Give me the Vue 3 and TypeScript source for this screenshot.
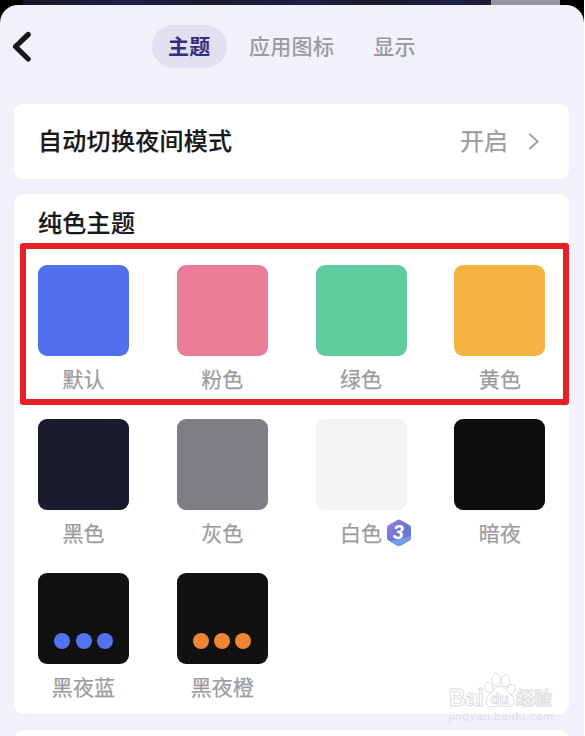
<script setup lang="ts">
interface Theme {
  name: string
  color: string
  dots?: string
  badge?: boolean
}

const tabs: string[] = ['主题', '应用图标', '显示']
const themes: Theme[] = [
  { name: '默认', color: '#5070ee' },
  { name: '粉色', color: '#eb7c97' },
  { name: '绿色', color: '#5fcb9f' },
  { name: '黄色', color: '#f5b341' },
  { name: '黑色', color: '#191a2b' },
  { name: '灰色', color: '#7e7f84' },
  { name: '白色', color: '#f3f3f3', badge: true },
  { name: '暗夜', color: '#0d0d0d' },
  { name: '黑夜蓝', color: '#111111', dots: '#5473f2' },
  { name: '黑夜橙', color: '#111111', dots: '#ef8432' },
]
</script>

<template>
  <div class="screen">
    <div class="backdrop"><span class="backdrop-art"></span><span class="backdrop-light"></span></div>
    <main class="sheet">
      <header class="header">
        <svg class="back" width="22" height="32" viewBox="0 0 22 32">
          <path d="M17.2 3.5 4.5 15.7 17.2 28" fill="none" stroke="#17171a" stroke-width="5.2" stroke-linecap="round" stroke-linejoin="round" />
        </svg>
        <nav class="tabs">
          <span v-for="(tab, i) in tabs" :key="tab" class="tab" :class="{ active: i === 0 }">{{ tab }}</span>
        </nav>
      </header>

      <section class="card setting">
        <span class="title">自动切换夜间模式</span>
        <span class="value">开启</span>
        <svg class="chevron" width="12" height="20" viewBox="0 0 12 20">
          <path d="M1.4 3.8 9.6 11.5 1.4 19" fill="none" stroke="#9c9c9e" stroke-width="1.8" />
        </svg>
      </section>

      <section class="card themes">
        <h2 class="title heading">纯色主题</h2>
        <div class="grid">
          <div v-for="theme in themes" :key="theme.name" class="item">
            <div class="swatch" :style="{ background: theme.color }">
              <template v-if="theme.dots">
                <i v-for="n in 3" :key="n" class="dot" :style="{ background: theme.dots }"></i>
              </template>
            </div>
            <div class="label">
              {{ theme.name }}
              <svg v-if="theme.badge" class="badge" width="26" height="28" viewBox="0 0 26 28">
                <defs>
                  <linearGradient id="gem" x1="0" y1="0" x2="1" y2="1">
                    <stop offset="0" stop-color="#9b82d9" />
                    <stop offset="0.55" stop-color="#6974d4" />
                    <stop offset="1" stop-color="#667be0" />
                  </linearGradient>
                </defs>
                <path d="M11.5 1 Q13 .2 14.5 1 L23.5 6 Q25 7 25 8.6 V19 Q25 20.6 23.6 21.5 L14.5 26.7 Q13 27.5 11.5 26.7 L2.4 21.5 Q1 20.6 1 19 V8.6 Q1 7 2.5 6Z" fill="url(#gem)" />
                <path d="M25 17 V19 Q25 20.6 23.6 21.5 L14.5 26.7 Q13 27.5 11.5 26.7 L4 22.4Z" fill="#739de9" />
                <text x="12.4" y="20" text-anchor="middle" class="badge-text">3</text>
              </svg>
            </div>
          </div>
        </div>
        <div class="highlight"></div>
      </section>

      <section class="card next"></section>
    </main>

    <svg class="watermark" width="108" height="54" viewBox="0 0 108 54">
      <g fill="#fff" stroke="#dadadd" stroke-width="0.9">
        <text x="0" y="33.5" class="wm-latin" textLength="35">Bai</text>
        <ellipse cx="39.7" cy="15.5" rx="4.2" ry="5.6" transform="rotate(-18 39.7 15.5)" />
        <ellipse cx="47.2" cy="7.6" rx="4.4" ry="6" />
        <ellipse cx="56.5" cy="8.8" rx="4.4" ry="6" transform="rotate(12 56.5 8.8)" />
        <ellipse cx="62" cy="17.5" rx="4.3" ry="5.2" transform="rotate(22 62 17.5)" />
        <path d="M51 14.5 C57 14.5 58 20 62 23 C67.5 28 65 35 59 34.7 C55 33.7 48 33.7 44 34.7 C37 36 35 28 40 23 C45 19 45 14.5 51 14.5Z" />
        <text x="41.5" y="32" class="wm-du">du</text>
        <text x="67" y="32.5" class="wm-cn">经验</text>
      </g>
      <text x="0" y="47.5" class="wm-url" textLength="104">jingyan.baidu.com</text>
    </svg>
  </div>
</template>

<style>
body {
  background: #fff;
  overflow: hidden;
}
</style>

<style scoped>
.screen {
  position: relative;
  width: 584px;
  height: 736px;
  overflow: hidden;
  background: #000;
  font-family: "Noto Sans CJK SC", sans-serif;
}
.backdrop {
  display: flex;
  height: 5px;
  padding-left: 23px;
}
.backdrop-art {
  width: 468px;
  background: linear-gradient(90deg, #181823, #20204b 22%, #1b1b2d 40%, #20204b 62%, #1a1a29 75%, #20204d 93%, #1b1a2a);
}
.backdrop-light {
  width: 69px;
  background: #9493a0;
}
.sheet {
  box-sizing: border-box;
  height: 731px;
  padding: 0 15px 0 14px;
  border-radius: 18px 18px 0 0;
  background: #f1f0fb;
}
.header {
  display: flex;
  height: 99px;
  align-items: flex-start;
}
.back {
  margin: 26px 0 0 -3px;
}
.tabs {
  display: flex;
  margin: 20px 0 0 119px;
}
.tab {
  box-sizing: border-box;
  padding: 0 16px;
  height: 43px;
  border-radius: 22px;
  color: #9b9aa3;
  font-size: 21px;
  font-weight: 500;
  letter-spacing: 0.3px;
  line-height: 41px;
}
.tab + .tab {
  margin-left: 6px;
}
.tab:nth-child(3) {
  margin-left: 7px;
}
.active {
  width: 75px;
  background: #e1dff0;
  color: #35307d;
  font-weight: 600;
}
.card {
  border-radius: 9px;
  background: #fff;
}
.title {
  color: #18181a;
  font-size: 24px;
  font-weight: 500;
  letter-spacing: 0.3px;
  -webkit-text-stroke: 0.2px #18181a;
}
.setting {
  display: flex;
  box-sizing: border-box;
  height: 75px;
  align-items: center;
  padding: 0 29px 4px 24px;
}
.value {
  margin-left: auto;
  color: #9c9c9e;
  font-size: 24px;
  -webkit-text-stroke: 0.25px #9c9c9e;
}
.chevron {
  margin-left: 20px;
}
.themes {
  position: relative;
  height: 520px;
  margin-top: 15px;
}
.heading {
  height: 71.4px;
  margin: 0;
  padding-left: 24px;
  line-height: 56px;
  box-sizing: border-box;
}
.grid {
  display: grid;
  grid-template-columns: repeat(4, 91px);
  grid-auto-rows: 153.8px;
  column-gap: 47.8px;
  padding-left: 24px;
}
.swatch {
  box-sizing: border-box;
  display: flex;
  justify-content: center;
  align-items: flex-end;
  gap: 5.2px;
  height: 91px;
  padding-bottom: 15px;
  border-radius: 9px;
}
.dot {
  width: 16px;
  height: 16px;
  border-radius: 50%;
}
.label {
  position: relative;
  color: #9c9c9e;
  font-size: 21px;
  -webkit-text-stroke: 0.25px #9c9c9e;
  letter-spacing: 0.1px;
  line-height: 30px;
  margin-top: 7px;
  text-align: center;
  white-space: nowrap;
}
.badge {
  position: absolute;
  left: 70px;
  top: 2px;
}
.badge-text {
  fill: #fff;
  font: italic bold 20px "Liberation Sans", sans-serif;
  -webkit-text-stroke: 0.3px #fff;
}
.highlight {
  position: absolute;
  box-sizing: border-box;
  left: 6px;
  top: 49px;
  width: 549px;
  height: 162px;
  border: 6px solid #e91e27;
  border-radius: 3px;
}
.next {
  height: 40px;
  margin-top: 16px;
}
.watermark {
  position: absolute;
  left: 449px;
  top: 672px;
}
.wm-latin {
  font: bold 23px "Liberation Sans", sans-serif;
}
.wm-du {
  font: bold 15px "Liberation Sans", sans-serif;
}
.wm-cn {
  font: bold 18px "Noto Sans CJK SC", sans-serif;
}
.wm-url {
  fill: #dedee3;
  font: 11.5px "Liberation Sans", sans-serif;
}
</style>
